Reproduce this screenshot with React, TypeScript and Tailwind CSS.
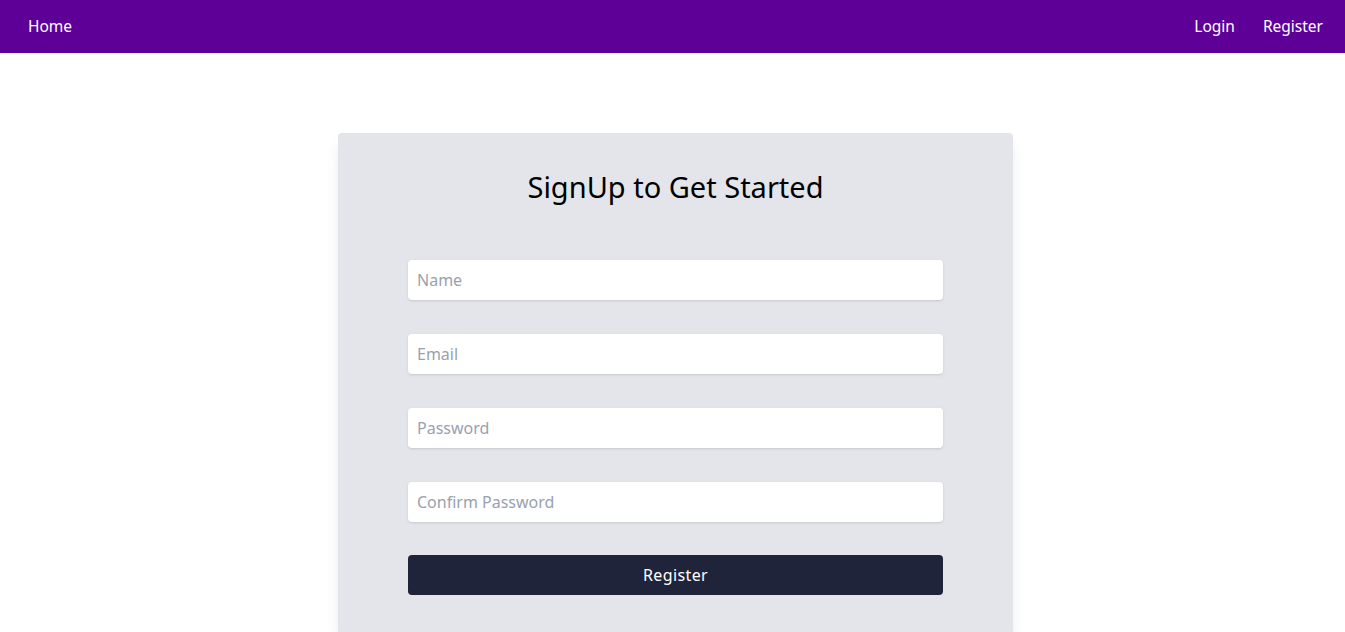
import React from "react";

const font = { fontFamily: '"Noto Sans", "Open Sans", sans-serif' };

function Field({ placeholder, type = "text" }: { placeholder: string; type?: string }) {
  return (
    <input
      type={type}
      placeholder={placeholder}
      className="w-full h-10 rounded px-[9px] bg-white text-base text-gray-800 placeholder:text-gray-400 shadow-sm outline-none"
    />
  );
}

export default function App() {
  return (
    <div className="min-h-screen bg-white" style={font}>
      <nav className="h-[53px] bg-[#5e0097] flex items-center justify-between pl-7 pr-[22px] text-white text-[15.5px]">
        <a href="#">Home</a>
        <div className="flex items-center gap-7">
          <a href="#">Login</a>
          <a href="#">Register</a>
        </div>
      </nav>

      <div className="flex justify-center pt-[80px] pl-[6px]">
        <div className="w-[675px] bg-[#e4e5ea] rounded shadow-lg px-[70px] pt-[34px] pb-10">
          <h1 className="text-center text-[29px] leading-10 text-black">SignUp to Get Started</h1>
          <form className="mt-[53px] flex flex-col gap-[34px]" onSubmit={(e) => e.preventDefault()}>
            <Field placeholder="Name" />
            <Field placeholder="Email" type="email" />
            <Field placeholder="Password" type="password" />
            <Field placeholder="Confirm Password" type="password" />
            <button
              type="submit"
              className="h-10 -mt-[1px] rounded bg-[#20243a] text-white text-base tracking-wide"
            >
              Register
            </button>
          </form>
        </div>
      </div>
    </div>
  );
}
